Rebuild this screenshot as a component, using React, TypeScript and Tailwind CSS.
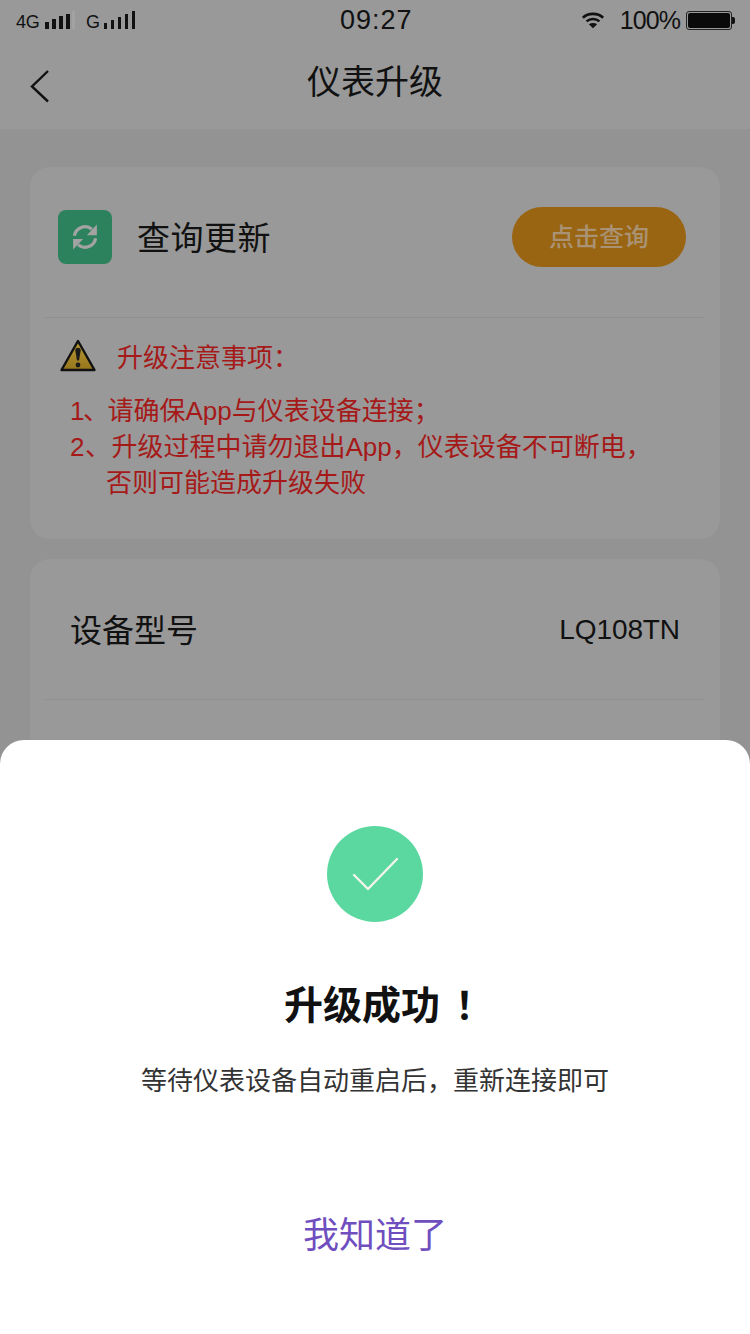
const cjk = "font-['Liberation_Sans','Noto_Sans_CJK_SC',sans-serif]";

function Signal({ levels }: { levels: number[] }) {
  return (
    <div className="flex items-end gap-[3.5px]">
      {levels.map((h, i) => (
        <div key={i} className="w-[3.5px] bg-[#111]" style={{ height: h }} />
      ))}
    </div>
  );
}

function StatusBar() {
  return (
    <div className="h-[40px] flex items-center justify-between relative pl-[16px] pr-[15px] text-[#111] font-['Liberation_Sans',sans-serif]">
      <div className="flex items-end mt-[3px]">
        <span className="text-[18px] leading-[20px] tracking-[-0.3px]">4G</span>
        <div className="ml-[6px] mb-[3px]"><Signal levels={[7, 10, 13, 15]} /></div>
        <div className="ml-[2px] mb-[3px] w-[3px] h-[18px] bg-[#a2a2a2]" />
        <span className="ml-[11px] text-[18px] leading-[20px]">G</span>
        <div className="ml-[4px] mb-[3px]"><Signal levels={[6, 9, 12, 15, 18]} /></div>
      </div>
      <span className="absolute left-[340px] top-[4px] text-[27px] leading-[32px] tracking-[1px]">09:27</span>
      <div className="flex items-center">
        <svg width="24" height="20" viewBox="0 0 26 20" fill="none" stroke="#111" strokeWidth="2.8">
          <path d="M2 7.5C8 2 18 2 24 7.5" />
          <path d="M6 11.5C10 8 16 8 20 11.5" />
          <path d="M13 19L8.5 14.5C11 13 15 13 17.5 14.5Z" fill="#111" stroke="none" />
        </svg>
        <span className="ml-[15px] text-[25px] leading-[30px] tracking-[-0.9px]">100%</span>
        <div className="ml-[6px] w-[46px] h-[19px] border border-[#222] rounded-[3px] p-[1px]">
          <div className="w-full h-full bg-[#0a0a0a] rounded-[2px]" />
        </div>
        <div className="w-[3px] h-[7px] bg-[#111] rounded-r-[2px]" />
      </div>
    </div>
  );
}

export default function App() {
  return (
    <div className={`relative w-[750px] h-[1334px] overflow-hidden bg-[#939393] ${cjk}`}>
      <div className="bg-[#999999] h-[130px] border-b border-[#949494]">
        <StatusBar />
        <div className="relative h-[80px] flex items-center justify-center">
          <svg className="absolute left-[30px] top-[29px]" width="20" height="34" viewBox="0 0 20 34" fill="none" stroke="#111" strokeWidth="2.4">
            <path d="M18 2L2 17.5L18 32.5" />
          </svg>
          <span className="text-[34px] leading-[44px] text-[#111] mt-[4px]">仪表升级</span>
        </div>
      </div>

      <div className="px-[30px] pt-[37px] flex flex-col gap-[20px]">
        <div className="h-[372px] bg-[#999999] rounded-[20px] px-[15px]">
          <div className="h-[151px] flex items-center border-b border-[#8f8f8f] pl-[13px] pr-[19px] pb-[11px]">
            <div className="w-[54px] h-[54px] rounded-[8px] bg-[#2c825d] flex items-center justify-center">
              <svg width="30" height="30" viewBox="0 0 24 24" fill="none" stroke="#a3a3a3" strokeWidth="2.6">
                <path d="M3.5 11A8.6 8.6 0 0 1 17.5 5.8" />
                <path d="M20.5 13A8.6 8.6 0 0 1 6.5 18.2" />
                <path d="M21.5 2V10.5H13.5Z" fill="#a3a3a3" stroke="none" />
                <path d="M2.5 22V13.5H10.5Z" fill="#a3a3a3" stroke="none" />
              </svg>
            </div>
            <span className="ml-[25px] text-[33px] leading-[44px] text-[#111] tracking-[0.5px] mt-[4px]">查询更新</span>
            <button className="ml-auto w-[174px] h-[60px] rounded-full bg-[#996512] text-[#aa9375] text-[25px] font-medium pt-[2px]">点击查询</button>
          </div>
          <div className="pt-[19px] pl-[15px] text-[#a51919]">
            <div className="flex items-center h-[36px]">
              <svg width="36" height="33" viewBox="0 0 36 33">
                <defs>
                  <linearGradient id="warn" x1="0" y1="0" x2="0" y2="1">
                    <stop offset="0" stopColor="#b89a35" />
                    <stop offset="1" stopColor="#96751c" />
                  </linearGradient>
                </defs>
                <path d="M18 2L34.5 31H1.5Z" fill="url(#warn)" stroke="#111" strokeWidth="2.4" strokeLinejoin="round" />
                <path d="M15.3 11.5a2.7 2.7 0 0 1 5.4 0L19 21.5h-2Z" fill="#1a1a1a" />
                <circle cx="18" cy="26" r="2.4" fill="#1a1a1a" />
              </svg>
              <span className="ml-[21px] text-[26px] leading-[36px] mt-[6px]">升级注意事项：</span>
            </div>
            <div className="mt-[20px] ml-[10px] text-[26px] leading-[36px]">
              <p><span className="tracking-[-1.5px]">1、</span>请确保App与仪表设备连接；</p>
              <p><span className="tracking-[0.5px]">2、</span>升级过程中请勿退出App，仪表设备不可断电，</p>
              <p className="pl-[36px]">否则可能造成升级失败</p>
            </div>
          </div>
        </div>

        <div className="bg-[#999999] rounded-[20px] px-[15px] h-[300px]">
          <div className="h-[141px] flex items-center justify-between border-b border-[#8f8f8f] pl-[25px] pr-[25px]">
            <span className="text-[32px] text-[#111] mt-[4px]">设备型号</span>
            <span className="text-[28px] text-[#111] tracking-[-0.1px] mt-[2px]">LQ108TN</span>
          </div>
        </div>
      </div>

      <div className="absolute left-0 right-0 top-[740px] bottom-0 bg-white rounded-t-[24px] flex flex-col items-center">
        <div className="mt-[86px] w-[96px] h-[96px] rounded-full bg-[#5ad8a0] flex items-center justify-center">
          <svg width="48" height="36" viewBox="0 0 48 36" fill="none" stroke="#f4f4ec" strokeWidth="2.4" strokeLinecap="round" strokeLinejoin="round">
            <path d="M3 19L17 33L46 3" />
          </svg>
        </div>
        <div className="mt-[56px] text-[39px] leading-[56px] font-semibold text-[#111] whitespace-nowrap">
          升级成功<span className="inline-block ml-[15px] w-[11px] text-[38px]">！</span>
        </div>
        <div className="mt-[27px] text-[26px] leading-[40px] text-[#333]">等待仪表设备自动重启后，重新连接即可</div>
        <div className="mt-[110px] text-[36px] leading-[50px] text-[#6f4ec0]">我知道了</div>
      </div>
    </div>
  );
}
